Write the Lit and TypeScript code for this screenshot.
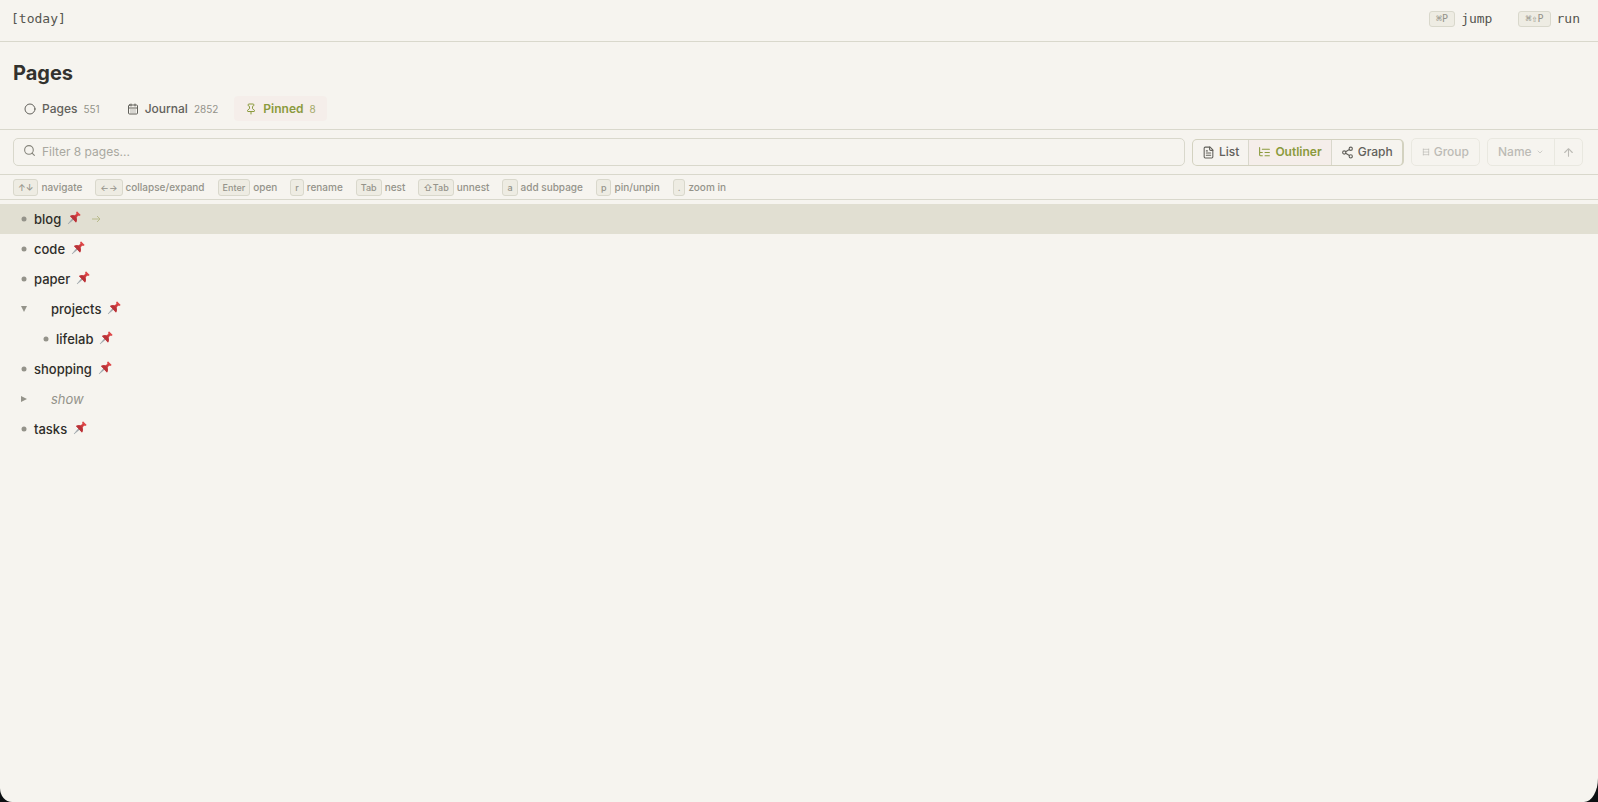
import { LitElement, html, svg, css, nothing } from "lit";
import { customElement, state } from "lit/decorators.js";
import { classMap } from "lit/directives/class-map.js";

const stroke = (size: number, body: unknown, width = 2) => html`<svg
  width=${size} height=${size} viewBox="0 0 24 24" fill="none" stroke="currentColor"
  stroke-width=${width} stroke-linecap="round" stroke-linejoin="round" aria-hidden="true"
>${body}</svg>`;

const icons = {
  circle: svg`<circle cx="12" cy="12" r="10"/>`,
  calendar: svg`<rect x="3" y="4" width="18" height="18" rx="2"/><path d="M8 2v4M16 2v4M3 10h18M8 14h.01M12 14h.01M16 14h.01M8 18h.01M12 18h.01M16 18h.01"/>`,
  pin: svg`<path d="M12 17v5"/><path d="M9 10.76a2 2 0 0 1-1.11 1.79l-1.78.9A2 2 0 0 0 5 15.24V16a1 1 0 0 0 1 1h12a1 1 0 0 0 1-1v-.76a2 2 0 0 0-1.11-1.79l-1.78-.9A2 2 0 0 1 15 10.76V7a1 1 0 0 1 1-1 2 2 0 0 0 0-4H8a2 2 0 0 0 0 4 1 1 0 0 1 1 1z"/>`,
  search: svg`<circle cx="11" cy="11" r="8"/><path d="m21 21-4.3-4.3"/>`,
  file: svg`<path d="M15 2H6a2 2 0 0 0-2 2v16a2 2 0 0 0 2 2h12a2 2 0 0 0 2-2V7Z"/><path d="M14 2v4a2 2 0 0 0 2 2h4M10 9H8M16 13H8M16 17H8"/>`,
  tree: svg`<path d="M21 12h-8M21 6H8M21 18h-8M3 6v4c0 1.1.9 2 2 2h3M3 10v6c0 1.1.9 2 2 2h3M3 3v3"/>`,
  share: svg`<circle cx="18" cy="5" r="3"/><circle cx="6" cy="12" r="3"/><circle cx="18" cy="19" r="3"/><path d="m8.59 13.51 6.83 3.98M15.41 6.51l-6.82 3.98"/>`,
  group: svg`<path d="M4 3v18M20 3v18M4 12h16M4 4h16M4 20h16"/>`,
  chevron: svg`<path d="m6 9 6 6 6-6"/>`,
  up: svg`<path d="m5 12 7-7 7 7M12 19V5"/>`,
};

const pushpin = html`<svg class="pushpin" width="14" height="14" viewBox="0 0 28 28" aria-label="pinned" role="img">
  <path d="M2 26 11 15l2 2z" fill="#9aa3a8" stroke="#9aa3a8" stroke-width="1"/>
  <path d="M6 10c3-2 6-2 8-1l5-3c-1-2 0-4 1-5l7 7c-1 1-3 2-5 1l-3 5c1 2 1 6-1 9z" fill="#d23c3e"/>
  <path d="M6 10c3-2 6-2 8-1l5 5c1 2 1 6-1 9z" fill="#b83238"/>
  <path d="m20 1 7 7c-1 1-2 1-3 1l-5-5c0-1 0-2 1-3z" fill="#e24a4c"/>
</svg>`;

interface Page {
  name: string;
  pinned: boolean;
  marker: "leaf" | "open" | "closed";
  depth?: number;
}

const pages: Page[] = [
  { name: "blog", pinned: true, marker: "leaf" },
  { name: "code", pinned: true, marker: "leaf" },
  { name: "paper", pinned: true, marker: "leaf" },
  { name: "projects", pinned: true, marker: "open" },
  { name: "lifelab", pinned: true, marker: "leaf", depth: 1 },
  { name: "shopping", pinned: true, marker: "leaf" },
  { name: "show", pinned: false, marker: "closed" },
  { name: "tasks", pinned: true, marker: "leaf" },
];

const hints: [string, string][] = [
  ["↑↓", "navigate"],
  ["←→", "collapse/expand"],
  ["Enter", "open"],
  ["r", "rename"],
  ["Tab", "nest"],
  ["⇧Tab", "unnest"],
  ["a", "add subpage"],
  ["p", "pin/unpin"],
  [".", "zoom in"],
];

@customElement("app-root")
export class AppRoot extends LitElement {
  @state() private selected = 0;
  @state() private tab = "Pinned";
  @state() private view = "Outliner";

  static styles = css`
    :host {
      display: block;
      background: #0c1012;
      --bg: #f6f4ef;
      --line: #d9d8cc;
      --accent: #8b9a3d;
      --tint: #f5eeea;
      --text: #33322e;
      --soft: #62615b;
      --mute: #94938a;
      font: 500 12px/20px Inter, sans-serif;
      color: var(--text);
    }
    * { box-sizing: border-box; }
    svg { display: block; flex: none; }
    button, input, select { font: inherit; color: inherit; margin: 0; }
    button { background: none; border: 0; padding: 0; display: flex; align-items: center; }
    a { color: inherit; text-decoration: none; }
    .shell {
      min-height: 100vh;
      background: var(--bg);
      border-radius: 0 0 14px 12px / 0 0 24px 14px;
    }
    .top {
      display: flex;
      align-items: center;
      justify-content: space-between;
      height: 42px;
      padding: 0 18px 4px 11px;
      border-bottom: 1px solid var(--line);
      font: 400 13px/20px "DejaVu Sans Mono", monospace;
      color: #55544f;
    }
    .actions { display: flex; gap: 26px; }
    .action { gap: 6px; }
    kbd {
      background: #eeece3;
      border: 1px solid var(--line);
      border-radius: 3px;
      color: var(--mute);
      font: 500 9px/13px Inter, sans-serif;
      padding: 1px 4px;
    }
    .top kbd { font: 400 10px/14px "DejaVu Sans Mono", monospace; padding: 0 6px; }
    h1 { margin: 0; padding: 18px 13px 10px; font: 700 20px/26px Inter, sans-serif; }
    .tabs { display: flex; gap: 5px; padding: 0 13px 8px; border-bottom: 1px solid var(--line); }
    .tab { gap: 6px; height: 25px; padding: 0 11px; border-radius: 4px; color: var(--soft); }
    .count { font-size: 10px; font-weight: 400; color: var(--mute); }
    .tab.on, .seg.on { background: var(--tint); color: var(--accent); font-weight: 600; }
    .tab.on .count { color: #a3a968; }
    .bar { display: flex; align-items: center; gap: 7px; padding: 8px 15px 8px 13px; border-bottom: 1px solid var(--line); }
    .field {
      flex: 1;
      display: flex;
      align-items: center;
      gap: 6px;
      height: 28px;
      padding: 0 9px;
      border: 1px solid var(--line);
      border-radius: 5px;
      color: #85847b;
    }
    .field svg { margin-bottom: 3px; }
    .field input { flex: 1; min-width: 0; border: 0; padding: 0; outline: 0; background: none; font-weight: 400; }
    .field input::placeholder { color: #a9a8a0; opacity: 1; }
    .box { display: flex; height: 27px; border: 1px solid var(--line); border-radius: 5px; overflow: hidden; }
    .views { border-color: #d3d2c0; border-right-width: 2px; }
    .seg { gap: 4px; padding: 0 9px; color: var(--soft); }
    .seg + .seg { border-left: 1px solid var(--line); }
    .off { height: 28px; opacity: 0.42; color: #6d6c66; }
    .off button { gap: 4px; padding: 0 10px; color: inherit; }
    .off .order { padding: 0 7px; }
    .pick { display: flex; align-items: center; gap: 4px; padding: 0 10px; border-right: 1px solid var(--line); }
    .pick select { appearance: none; border: 0; padding: 0; background: none; opacity: 1; }
    .hints { display: flex; flex-wrap: wrap; gap: 13px; padding: 4px 13px 3px; border-bottom: 1px solid var(--line); }
    .hint { display: flex; gap: 3px; font-size: 10px; line-height: 16px; color: var(--mute); }
    .tree { list-style: none; margin: 0; padding: 4px 0; font-size: 13px; }
    .row { display: flex; align-items: center; height: 30px; padding: 0 19px; }
    .row.on { background: #e1dfd2; }
    .row.child { padding-left: 41px; }
    .mark { display: flex; justify-content: center; width: 10px; margin-right: 5px; color: var(--mute); }
    .row.branch .mark { margin-right: 22px; }
    .name { color: #2e2d29; }
    .name.ghost { font-style: italic; font-weight: 400; color: var(--mute); }
    .pushpin { margin: 0 0 2px 6px; }
    .go { margin-left: 10px; color: #b9bb8c; }
  `;

  private mark(kind: Page["marker"]) {
    const shape =
      kind === "leaf" ? svg`<circle cx="5" cy="5" r="2.5"/>`
      : kind === "open" ? svg`<path d="M2 2h6L5 8z"/>`
      : svg`<path d="M2 2v6l6-3z"/>`;
    return html`<svg width="10" height="10" viewBox="0 0 10 10" fill="currentColor" aria-hidden="true">${shape}</svg>`;
  }

  private tabButton(label: string, count: number, icon: unknown) {
    return html`<button class=${classMap({ tab: true, on: this.tab === label })} role="tab"
      aria-selected=${this.tab === label} @click=${() => (this.tab = label)}>
      ${stroke(12, icon)}<span>${label}</span><span class="count">${count}</span>
    </button>`;
  }

  private viewButton(label: string, icon: unknown) {
    return html`<button class=${classMap({ seg: true, on: this.view === label })}
      aria-pressed=${this.view === label} @click=${() => (this.view = label)}>
      ${stroke(13, icon)}<span>${label}</span>
    </button>`;
  }

  render() {
    return html`<div class="shell">
      <header class="top">
        <a href="#today">[today]</a>
        <div class="actions">
          <button class="action"><kbd>⌘P</kbd>jump</button>
          <button class="action"><kbd>⌘⇧P</kbd>run</button>
        </div>
      </header>
      <main>
        <h1>Pages</h1>
        <div class="tabs" role="tablist">
          ${this.tabButton("Pages", 551, icons.circle)}
          ${this.tabButton("Journal", 2852, icons.calendar)}
          ${this.tabButton("Pinned", 8, icons.pin)}
        </div>
        <div class="bar">
          <label class="field">${stroke(13, icons.search)}
            <input type="text" aria-label="Filter pages" placeholder="Filter 8 pages..." />
          </label>
          <div class="box views">
            ${this.viewButton("List", icons.file)}
            ${this.viewButton("Outliner", icons.tree)}
            ${this.viewButton("Graph", icons.share)}
          </div>
          <div class="box off"><button disabled>${stroke(8, icons.group)}Group</button></div>
          <div class="box off">
            <label class="pick">
              <select aria-label="Sort by" disabled><option>Name</option></select>
              ${stroke(8, icons.chevron)}
            </label>
            <button class="order" disabled aria-label="Ascending">${stroke(13, icons.up)}</button>
          </div>
        </div>
        <div class="hints">
          ${hints.map(([key, text]) => html`<span class="hint"><kbd>${key}</kbd>${text}</span>`)}
        </div>
        <ul class="tree">
          ${pages.map((page, i) => html`<li
            class=${classMap({ row: true, on: i === this.selected, child: !!page.depth, branch: page.marker !== "leaf" })}
            @click=${() => (this.selected = i)}>
            <span class="mark">${this.mark(page.marker)}</span>
            <a class=${classMap({ name: true, ghost: !page.pinned })} href="#${page.name}">${page.name}</a>
            ${page.pinned ? pushpin : nothing}
            ${i === this.selected ? html`<svg class="go" width="10" height="10" viewBox="0 0 10 10" fill="none"
              stroke="currentColor" aria-hidden="true"><path d="M1 5h8M6 2l3 3-3 3"/></svg>` : nothing}
          </li>`)}
        </ul>
      </main>
    </div>`;
  }
}
